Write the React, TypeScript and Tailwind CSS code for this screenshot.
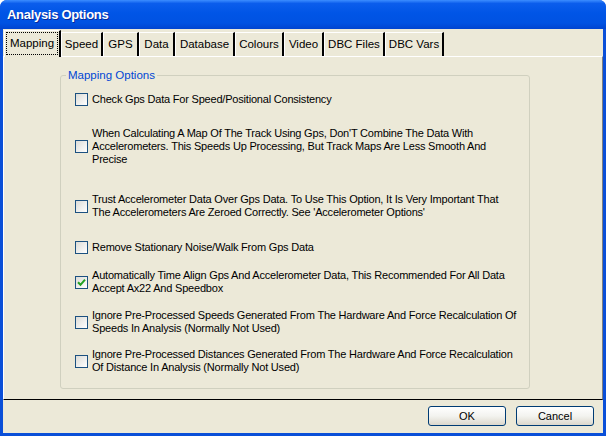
import React from "react";

type Option = {
  lines: string[];
  checked?: boolean;
  gap: string;
};

const tabs = [
  { label: "Mapping", w: "w-[57px]", active: true },
  { label: "Speed", w: "w-[42px]" },
  { label: "GPS", w: "w-[36px]" },
  { label: "Data", w: "w-[36px]" },
  { label: "Database", w: "w-[60px]" },
  { label: "Colours", w: "w-[49px]" },
  { label: "Video", w: "w-[40px]" },
  { label: "DBC Files", w: "w-[61px]" },
  { label: "DBC Vars", w: "w-[59px]" },
];

const options: Option[] = [
  { lines: ["Check Gps Data For Speed/Positional Consistency"], gap: "mt-[11px]" },
  {
    lines: [
      "When Calculating A Map Of The Track Using Gps, Don'T Combine The Data With",
      "Accelerometers. This Speeds Up Processing, But Track Maps Are Less Smooth And",
      "Precise",
    ],
    gap: "mt-[21px]",
  },
  {
    lines: [
      "Trust Accelerometer Data Over Gps Data. To Use This Option, It Is Very Important That",
      "The Accelerometers Are Zeroed Correctly. See 'Accelerometer Options'",
    ],
    gap: "mt-[27px]",
  },
  { lines: ["Remove Stationary Noise/Walk From Gps Data"], gap: "mt-[22px]" },
  {
    lines: [
      "Automatically Time Align Gps And Accelerometer Data, This Recommended For All Data",
      "Accept Ax22 And Speedbox",
    ],
    checked: true,
    gap: "mt-[15px]",
  },
  {
    lines: [
      "Ignore Pre-Processed Speeds Generated From The Hardware And Force Recalculation Of",
      "Speeds In Analysis (Normally Not Used)",
    ],
    gap: "mt-[14px]",
  },
  {
    lines: [
      "Ignore Pre-Processed Distances Generated From The Hardware And Force Recalculation",
      "Of Distance In Analysis (Normally Not Used)",
    ],
    gap: "mt-[13px]",
  },
];

function Checkbox({ checked }: { checked?: boolean }) {
  return (
    <div className="w-[13px] h-[13px] shrink-0 border border-[#1C5180] bg-gradient-to-br from-[#DCDCD7] to-[#FFFFFF] flex items-center justify-center">
      {checked && (
        <svg width="9" height="9" viewBox="0 0 9 9">
          <path d="M1 4.2 L3.5 6.8 L8 1.6" fill="none" stroke="#21A121" strokeWidth="2" />
        </svg>
      )}
    </div>
  );
}

function Button({ label }: { label: string }) {
  return (
    <button className="w-[78px] h-[20px] rounded-[3px] border border-[#003C74] bg-gradient-to-b from-[#FFFFFF] via-[#F3F3EF] to-[#DCD8CC] text-[11px] leading-[13px] text-black">
      {label}
    </button>
  );
}

export default function App() {
  return (
    <div
      className="w-[606px] h-[436px] bg-white"
      style={{ fontFamily: '"Liberation Sans", Arial, sans-serif' }}
    >
      <div className="w-full h-full rounded-t-[7px] bg-[#0A4FD8] flex flex-col overflow-hidden">
        {/* title bar */}
        <div className="h-[29px] shrink-0 flex items-center pl-[7px] bg-[linear-gradient(180deg,#3C8DFF_0%,#0B5DEC_12%,#0055E6_45%,#0052E2_80%,#0044D0_100%)]">
          <span className="text-white font-bold text-[13px] tracking-[-0.3px] [text-shadow:1px_1px_0_#0A2A9A]">
            Analysis Options
          </span>
        </div>

        <div className="flex-1 mx-[3px] mb-[3px] bg-[#ECE9D8] flex flex-col">
          {/* tabs */}
          <div className="h-[27px] shrink-0 flex items-end pl-[1px]">
            {tabs.map((t) =>
              t.active ? (
                <div
                  key={t.label}
                  className={`${t.w} h-[27px] -mb-[1px] relative z-10 bg-[#ECE9D8] border-l border-t border-white border-r-2 border-r-[#000000] p-[1px]`}
                >
                  <div className="w-full h-[23px] border border-dotted border-black flex items-center justify-center text-[11.5px] text-black">
                    {t.label}
                  </div>
                </div>
              ) : (
                <div
                  key={t.label}
                  className={`${t.w} h-[24px] bg-[#ECE9D8] border-l border-t border-white border-r-2 border-r-[#000000] flex items-center justify-center text-[11.5px] text-black`}
                >
                  {t.label}
                </div>
              )
            )}
          </div>

          {/* tab panel */}
          <div className="h-[344px] shrink-0 border-t border-l border-white border-r border-r-[#808080] border-b border-b-black">
            <fieldset className="ml-[56px] mt-[12px] w-[470px] h-[320px] border border-[#D0D0BF] rounded-[3px] pl-[14px]">
              <legend className="ml-[-9px] px-[2px] text-[11.5px] leading-[13px] text-[#0046D5]">
                Mapping Options
              </legend>
              {options.map((o, i) => (
                <div key={i} className={`${o.gap} flex items-center gap-[4px]`}>
                  <Checkbox checked={o.checked} />
                  <div className="text-[11px] leading-[13px] tracking-[-0.2px] text-black whitespace-nowrap">
                    {o.lines.map((l, j) => (
                      <div key={j}>{l}</div>
                    ))}
                  </div>
                </div>
              ))}
            </fieldset>
          </div>

          {/* buttons */}
          <div className="flex-1 flex justify-end items-start gap-[10px] pt-[6px] pr-[9px]">
            <Button label="OK" />
            <Button label="Cancel" />
          </div>
        </div>
      </div>
    </div>
  );
}
